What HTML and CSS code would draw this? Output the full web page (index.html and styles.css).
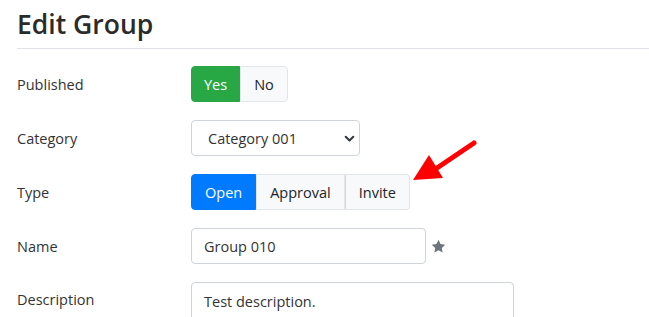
FILE: index.html
```html
<!DOCTYPE html>
<html lang="en">
<head>
<meta charset="UTF-8">
<meta name="viewport" content="width=device-width, initial-scale=1.0">
<title>Edit Group</title>
<link rel="stylesheet" href="styles.css">
</head>
<body>
    <div class="container">
        <h1>Edit Group</h1>
        <form class="group-form">
            <div class="form-row">
                <label>Published</label>
                <div class="btn-group">
                    <button type="button" class="btn btn-success">Yes</button>
                    <button type="button" class="btn btn-light">No</button>
                </div>
            </div>
            <div class="form-row">
                <label for="category">Category</label>
                <div class="select-wrap">
                    <select id="category" class="form-select">
                        <option>Category 001</option>
                    </select>
                    <svg class="chevron" width="11" height="11" viewBox="0 0 16 16"><path d="M2.5 5.5l5.5 5.5 5.5-5.5" fill="none" stroke="#343a40" stroke-width="3" stroke-linecap="round" stroke-linejoin="round"/></svg>
                </div>
            </div>
            <div class="form-row type-row">
                <label>Type</label>
                <div class="btn-group">
                    <button type="button" class="btn btn-primary">Open</button>
                    <button type="button" class="btn btn-light">Approval</button>
                    <button type="button" class="btn btn-light">Invite</button>
                </div>
                <!-- annotation arrow -->
                <svg class="arrow" width="70" height="50" viewBox="0 0 70 50">
                    <line x1="63" y1="4" x2="26" y2="29" stroke="#f00" stroke-width="5" stroke-linecap="round"/>
                    <polygon points="2,41 18,16 32,39" fill="#f00"/>
                </svg>
            </div>
            <div class="form-row">
                <label for="name">Name</label>
                <div class="name-wrap">
                    <input type="text" id="name" class="form-control name-input" value="Group 010">
                    <svg class="star" width="15" height="15" viewBox="0 0 16 16"><path d="M8 .8l2.2 4.6 5 .6-3.7 3.5.9 5L8 12.1l-4.4 2.4.9-5L.8 6l5-.6z" fill="#6c757d"/></svg>
                </div>
            </div>
            <div class="form-row">
                <label for="description">Description</label>
                <textarea id="description" class="form-control desc-input">Test description.</textarea>
            </div>
        </form>
    </div>
</body>
</html>
```

FILE: styles.css
```css
body {
    margin: 0;
    font-family: "Open Sans", Arial, sans-serif;
    color: #212529;
    background-color: #fff;
    overflow: hidden;
}
.container {
    padding: 6px 0 0 17px;
}
h1 {
    margin: 0 0 17px 0;
    padding-bottom: 6px;
    font-size: 26.5px;
    font-weight: 600;
    color: #2b2b2b;
    border-bottom: 1px solid #dee2e6;
    line-height: 36px;
}
.form-row {
    display: flex;
    align-items: center;
    margin-bottom: 18px;
    position: relative;
}
.form-row label {
    width: 174px;
    flex-shrink: 0;
    font-size: 14.5px;
    color: #333;
}
.btn-group {
    display: flex;
}
.btn {
    font-family: inherit;
    font-size: 14.5px;
    height: 36px;
    padding: 0 13px;
    border: 1px solid transparent;
    border-radius: 0;
    cursor: pointer;
}
.btn-group .btn:first-child {
    border-radius: 4px 0 0 4px;
}
.btn-group .btn:last-child {
    border-radius: 0 4px 4px 0;
}
.btn-success {
    background-color: #28a745;
    border-color: #28a745;
    color: #fff;
    padding: 0 12px;
}
.btn-primary {
    background-color: #007bff;
    border-color: #007bff;
    color: #fff;
}
.btn-light {
    background-color: #f8f9fa;
    border-color: #e3e6e9;
    color: #212529;
}
.btn-light + .btn-light {
    border-left-color: #d6d9dc;
}
.select-wrap {
    position: relative;
}
.form-select {
    appearance: none;
    width: 169px;
    height: 36px;
    padding: 0 30px 0 16px;
    font-family: inherit;
    font-size: 14.5px;
    color: #333;
    background-color: #fff;
    border: 1px solid #ced4da;
    border-radius: 4px;
}
.chevron {
    position: absolute;
    right: 5px;
    top: 13px;
}
.form-control {
    font-family: inherit;
    font-size: 14.5px;
    color: #333;
    border: 1px solid #ced4da;
    border-radius: 4px;
    box-sizing: border-box;
    padding: 0 12px;
}
.name-wrap {
    display: flex;
    align-items: center;
    gap: 5px;
}
.name-input {
    width: 235px;
    height: 36px;
}
.desc-input {
    width: 323px;
    height: 60px;
    padding-top: 8px;
    resize: none;
    align-self: flex-start;
    line-height: 22px;
}
.form-row:last-child label {
    align-self: flex-start;
    padding-top: 8px;
}
.arrow {
    position: absolute;
    left: 394px;
    top: -35px;
}
```
